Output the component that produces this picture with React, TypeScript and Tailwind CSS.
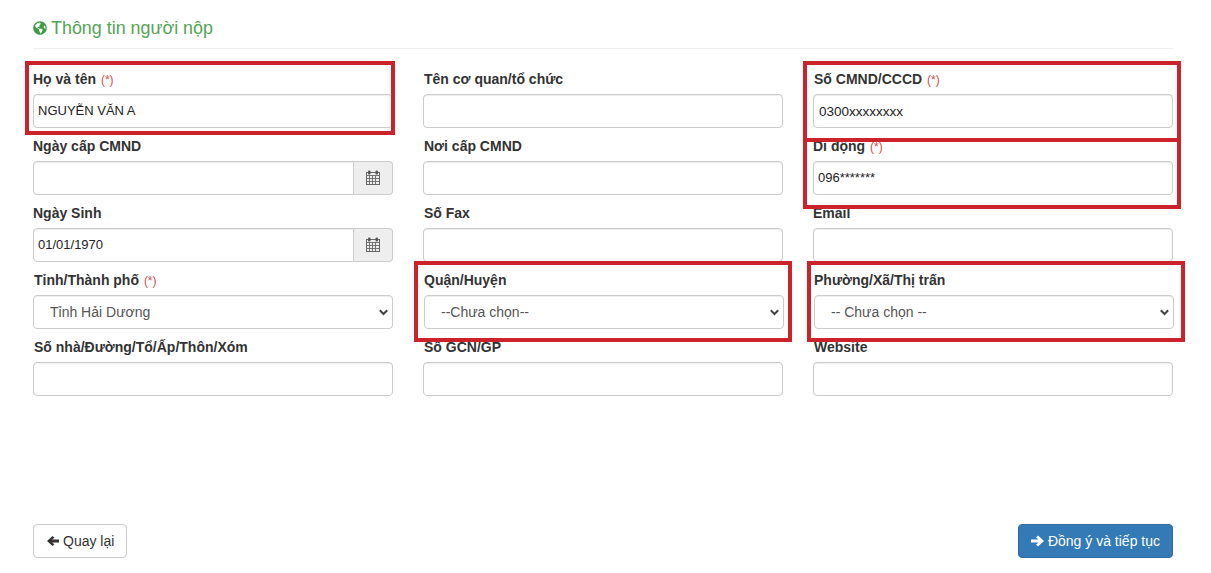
import React from "react";
import { FaGlobeAmericas } from "react-icons/fa";

const Calendar = () => (
  <svg className="-mt-[1px]" width="14" height="15" viewBox="0 0 14 15" fill="none" stroke="#666" strokeWidth="1">
    <rect x="0.5" y="2.5" width="13" height="12" fill="#eee" />
    <path d="M0.5 5.5h13M0.5 8.5h13M0.5 11.5h13M3.5 5.5v9M6.5 5.5v9M9.5 5.5v9" strokeWidth="0.9" />
    <rect x="2" y="0.5" width="2.5" height="4" rx="1" fill="#555" stroke="none" />
    <rect x="9.5" y="0.5" width="2.5" height="4" rx="1" fill="#555" stroke="none" />
  </svg>
);

const ArrowLeft = () => (
  <svg width="12" height="12" viewBox="0 0 13 12" fill="currentColor">
    <path d="M0 6 6 .5 8 2.5 5.5 4.5H13v3H5.5L8 9.5 6 11.5Z" />
  </svg>
);

const ArrowRight = () => (
  <svg width="13" height="12" viewBox="0 0 13 12" fill="currentColor">
    <path d="M13 6 7 .5 5 2.5 7.5 4.5H0v3h7.5L5 9.5 7 11.5Z" />
  </svg>
);

const Chevron = () => (
  <svg
    className="pointer-events-none absolute right-[5px] bottom-[13px]"
    width="9"
    height="7"
    viewBox="0 0 9 7"
    fill="none"
    stroke="#444"
    strokeWidth="2"
  >
    <path d="M.8 1.2 4.5 5 8.2 1.2" />
  </svg>
);

const Req = () => <span className="ml-[1px] font-normal text-[12px] text-[#d0504c]">(*)</span>;

const inputCls =
  "block w-full h-[34px] rounded-[4px] border border-[#ccc] bg-white px-[4px] text-[#222] shadow-[inset_0_1px_1px_rgba(0,0,0,0.075)] outline-none";

function Field({ label, req, value, pad = "text-[13px] pb-[2px]", shift = false }: { label: string; req?: boolean; value?: string; pad?: string; shift?: boolean }) {
  return (
    <div>
      <label className={`block h-[20px] mb-[5px] text-[14px] leading-[20px] font-bold text-[#333] ${shift ? "pl-px" : ""}`}>
        {label} {req && <Req />}
      </label>
      <input readOnly value={value ?? ""} className={`${inputCls} ${pad}`} />
    </div>
  );
}

function DateField({ label, value }: { label: string; value?: string }) {
  return (
    <div>
      <label className="block h-[20px] mb-[5px] text-[14px] leading-[20px] font-bold text-[#333]">{label}</label>
      <div className="flex h-[34px]">
        <input
          readOnly
          value={value ?? ""}
          className="min-w-0 flex-1 h-[34px] rounded-l-[4px] border border-[#ccc] bg-white px-[4px] pb-[2px] text-[13px] text-[#222] shadow-[inset_0_1px_1px_rgba(0,0,0,0.075)] outline-none"
        />
        <span className="flex w-[39px] items-center justify-center rounded-r-[4px] border border-l-0 border-[#ccc] bg-[#eee]">
          <Calendar />
        </span>
      </div>
    </div>
  );
}

function SelectField({ label, req, option, shift }: { label: string; req?: boolean; option: string; shift?: boolean }) {
  return (
    <div className={`relative ${shift ? "ml-px -mr-px" : ""}`}>
      <label className={`block h-[20px] mb-[5px] text-[14px] leading-[20px] font-bold text-[#333] ${shift ? "" : "pl-px"}`}>
        {label} {req && <Req />}
      </label>
      <select
        defaultValue={option}
        className="block w-full h-[34px] appearance-none rounded-[4px] border border-[#ccc] bg-white pl-[16px] pr-[20px] text-[14px] text-[#555] shadow-[inset_0_1px_1px_rgba(0,0,0,0.075)] outline-none"
      >
        <option>{option}</option>
      </select>
      <Chevron />
    </div>
  );
}

const Mark = ({ cls }: { cls: string }) => (
  <div className={`pointer-events-none absolute border-4 border-[#cc2229] ${cls}`} />
);

export default function App() {
  return (
    <div
      className="relative h-[573px] w-full overflow-hidden bg-white px-[33px] pt-[16px] text-[#333]"
      style={{ fontFamily: '"Liberation Sans", Arial, sans-serif' }}
    >
      <h3 className="flex h-[24px] items-center gap-[4px] text-[17.9px] font-normal text-[#55a355]">
        <FaGlobeAmericas className="text-[14px] text-[#3f9a47]" />
        <span>Thông tin người nộp</span>
      </h3>
      <div className="mt-[8px] mb-[20px] h-px w-[1140px] bg-[#eee]" />

      <div className="grid w-[1140px] grid-cols-3 gap-x-[30px] gap-y-[8px]">
        <Field label="Họ và tên" req value="NGUYỄN VĂN A" />
        <Field label="Tên cơ quan/tổ chức" shift />
        <Field label="Số CMND/CCCD" req value="0300xxxxxxxx" pad="pl-[5px] text-[13.5px]" shift />

        <DateField label="Ngày cấp CMND" />
        <Field label="Nơi cấp CMND" shift />
        <Field label="Di động" req value="096*******" />

        <DateField label="Ngày Sinh" value="01/01/1970" />
        <Field label="Số Fax" shift />
        <Field label="Email" />

        <SelectField label="Tỉnh/Thành phố" req option="Tỉnh Hải Dương" />
        <SelectField label="Quận/Huyện" option="--Chưa chọn--" shift />
        <SelectField label="Phường/Xã/Thị trấn" option="-- Chưa chọn --" shift />

        <Field label="Số nhà/Đường/Tổ/Ấp/Thôn/Xóm" shift />
        <Field label="Số GCN/GP" shift />
        <Field label="Website" shift />
      </div>

      <div className="mt-[128px] flex w-[1140px] justify-between">
        <button className="flex h-[34px] items-center gap-[4px] rounded-[4px] border border-[#ccc] bg-white pl-[13px] pr-[12px] text-[14px] text-[#333]">
          <ArrowLeft />
          Quay lại
        </button>
        <button className="flex h-[34px] items-center gap-[4px] rounded-[4px] border border-[#2e6da4] bg-[#337ab7] px-[12px] text-[14px] text-white">
          <ArrowRight />
          Đồng ý và tiếp tục
        </button>
      </div>

      <Mark cls="left-[25px] top-[61px] w-[370px] h-[74px]" />
      <Mark cls="left-[803px] top-[61px] w-[378px] h-[81px]" />
      <Mark cls="left-[803px] top-[138px] w-[378px] h-[71px]" />
      <Mark cls="left-[414px] top-[261px] w-[378px] h-[81px]" />
      <Mark cls="left-[807px] top-[261px] w-[378px] h-[81px]" />
    </div>
  );
}
